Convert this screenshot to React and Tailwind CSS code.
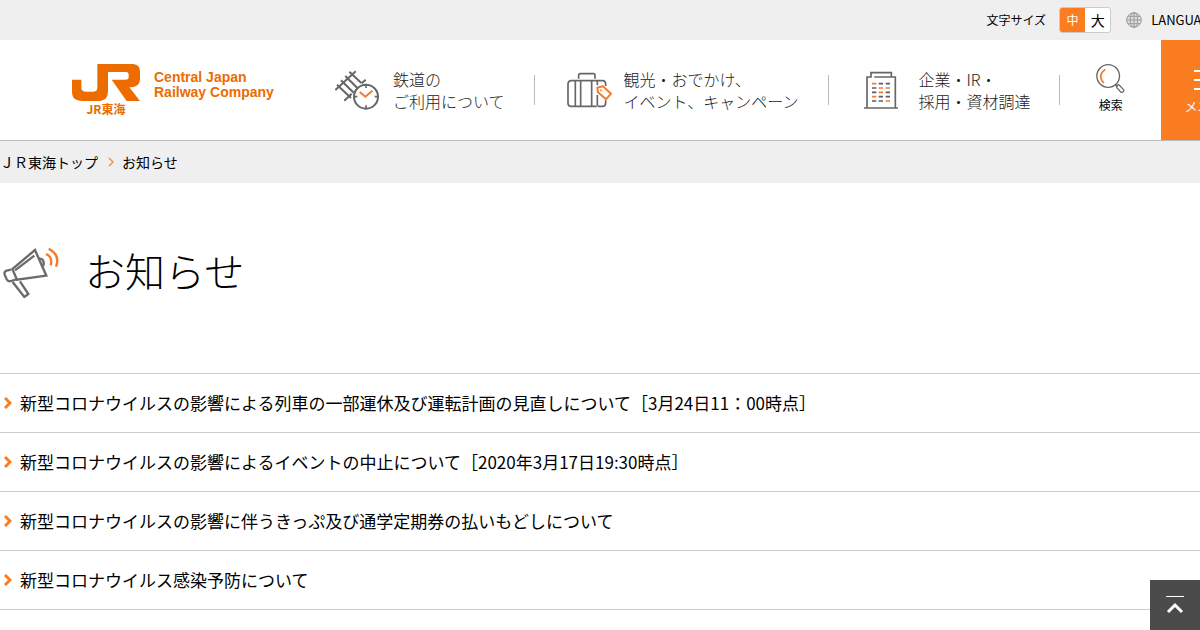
import React from 'react';

const news = [
  '新型コロナウイルスの影響による列車の一部運休及び運転計画の見直しについて［3月24日11：00時点］',
  '新型コロナウイルスの影響によるイベントの中止について［2020年3月17日19:30時点］',
  '新型コロナウイルスの影響に伴うきっぷ及び通学定期券の払いもどしについて',
  '新型コロナウイルス感染予防について',
];

function JrMark() {
  return (
    <svg viewBox="0 0 204 111" className="h-[37px] w-[68px]" fill="#ec6c00" aria-hidden="true">
      <path d="M76 0H176C198 0 204 8 204 24V44C204 62 194 69 172 70L204 111H164L119 47H160C168 47 170 44 170 38V33C170 27 168 24 162 24H108V80C108 102 98 111 76 111H32C8 111 0 102 0 82V47H28V70C28 79 32 83 40 83H64C73 83 76 79 76 70Z" />
    </svg>
  );
}

function RailIcon() {
  return (
    <svg viewBox="30 30 132 120" className="h-10 w-11 shrink-0" fill="none" stroke="#666" strokeWidth="6" aria-hidden="true">
      <path d="M31 90L92 34M58 122L80 101M110 70L122 59" />
      <path d="M36 74L78 114M48 61L86 98M61 48L97 84M73 35L109 69" />
      <circle cx="123" cy="110" r="36" />
      <path d="M123 76v8M123 136v8M89 110h8M149 110h8" strokeWidth="5" />
      <path d="M104 96L121 110L142 92" stroke="#f47b2b" />
    </svg>
  );
}

function SuitcaseIcon() {
  return (
    <svg viewBox="36 36 135 108" className="h-9 w-[45px] shrink-0" fill="none" stroke="#666" strokeWidth="5" aria-hidden="true">
      <path d="M71 56V46Q71 41 76 41H115Q120 41 120 46V56" />
      <path d="M125 139H48Q39 139 39 129V73Q39 62 49 62H143Q152 62 152 73V78M129 139H144Q152 138 152 128V121" />
      <path d="M61 62V139M77 62V139M110 62V139M127 62V76M127 105V139" />
      <path d="M127 83L144 79L168 101L153 118L129 97Z" stroke="#f47b2b" strokeWidth="6" strokeLinejoin="round" />
      <circle cx="138" cy="91" r="2" stroke="#f47b2b" strokeWidth="3" />
    </svg>
  );
}

function BuildingIcon() {
  return (
    <svg viewBox="132 34 102 114" className="h-[38px] w-[34px] shrink-0" fill="none" stroke="#666" strokeWidth="5" aria-hidden="true">
      <path d="M132 145H234M141 145V52H153V39H214V52H226V145M163 52H214" />
      <path d="M156 72H169M176 85H189M197 85H210M176 98H189M156 111H169M197 124H210" stroke="#f47b2b" />
      <path d="M176 72H189M197 72H210M156 85H169M156 98H169M197 98H210M176 111H189M197 111H210M156 124H169M176 124H189" stroke="#5b5d6b" />
    </svg>
  );
}

function SearchIcon() {
  return (
    <svg viewBox="110 70 86 87" className="h-[29px] w-[29px]" fill="none" stroke="#666" strokeWidth="4" aria-hidden="true">
      <circle cx="146" cy="106" r="34" />
      <path d="M137 86Q112 105 133 127" stroke="#f47b2b" strokeWidth="5" />
      <path d="M167 133L174 138M174 138Q171 132 178 132L192 147Q195 151 190 154Q185 157 182 152L172 141Q170 137 174 134" />
    </svg>
  );
}

function GlobeIcon() {
  return (
    <svg viewBox="0 0 48 48" className="h-4 w-4" fill="none" stroke="#9b9b9b" strokeWidth="3" aria-hidden="true">
      <circle cx="24" cy="24" r="22" fill="#ddd" />
      <ellipse cx="24" cy="24" rx="11" ry="22" />
      <path d="M24 2V46M2 24H46M6 13H42M6 35H42" />
    </svg>
  );
}

function MegaphoneIcon() {
  return (
    <svg viewBox="9 36 168 153" className="h-[51px] w-14 shrink-0" fill="none" stroke="#6b6b6b" strokeWidth="7" aria-hidden="true">
      <path d="M105 45L139 122L51 134L37 102Z" />
      <path d="M45 106L103 62" />
      <path d="M33 104L20 107Q11 110 14 119L20 133Q24 141 34 138L48 133" />
      <path d="M38 141L73 186L85 177L60 139" />
      <path d="M117 71Q135 70 130 94" />
      <path d="M138 57Q159 66 152 91M146 41Q182 60 168 95" stroke="#f47b2b" />
    </svg>
  );
}

const navItems = [
  { icon: <RailIcon />, lines: ['鉄道の', 'ご利用について'], link: 'gap-[14px] pl-[64px] pr-[29px]' },
  { icon: <SuitcaseIcon />, lines: ['観光・おでかけ、', 'イベント、キャンペーン'], link: 'gap-3 pl-8 pr-[30px]' },
  { icon: <BuildingIcon />, lines: ['企業・IR・', '採用・資材調達'], link: 'gap-5 pl-[35px] pr-[29px]' },
];

function TopBar() {
  return (
    <div className="flex h-10 items-center bg-[#efefef] pr-[42px] text-xs">
      <span className="ml-auto">文字サイズ</span>
      <div className="ml-[13px] flex h-[26px] w-[52px] overflow-hidden rounded-[3px] border border-[#ccc] bg-white">
        <button type="button" className="flex-1 bg-[#fa7d22] text-white">中</button>
        <button type="button" className="flex-1 text-sm">大</button>
      </div>
      <a href="#language" className="ml-[15px] flex items-center gap-[9px]">
        <GlobeIcon />
        <span className="text-[13px]">LANGUAGE</span>
      </a>
    </div>
  );
}

function Header() {
  return (
    <header className="min-w-[1260px]">
      <TopBar />
      <div className="flex h-[101px] border-b border-[#bbb] bg-white">
        <a href="#top" className="ml-[72px] flex w-[199px] items-start gap-[14px] pt-6 text-[#ec6c00]">
          <span className="flex flex-col items-center">
            <JrMark />
            <span className="text-xs leading-[15px] font-bold">JR東海</span>
          </span>
          <span className="pt-[6px] font-['Liberation_Sans',sans-serif] text-sm leading-[15px] font-bold whitespace-nowrap">
            Central Japan<br />Railway Company
          </span>
        </a>

        {/* Global navigation */}
        <nav className="flex items-center">
          {navItems.map((item) => (
            <a
              key={item.lines[0]}
              href="#nav"
              className={`flex h-[30px] items-center border-r border-[#bbb] font-['Noto_Sans_CJK_JP_Light','Noto_Sans_CJK_JP',sans-serif] text-base leading-[22px] font-light whitespace-nowrap text-[#222] ${item.link}`}
            >
              {item.icon}
              <span>{item.lines[0]}<br />{item.lines[1]}</span>
            </a>
          ))}
        </nav>

        <button type="button" className="flex w-[102px] flex-col items-center pt-6 text-xs">
          <SearchIcon />
          <span className="mt-1">検索</span>
        </button>
        <button type="button" className="ml-auto flex w-[100px] flex-col items-center bg-[#fa7d22] pt-[30px] text-[13px] leading-4 text-white">
          <svg viewBox="0 0 34 20" className="h-5 w-[34px]" stroke="currentColor" strokeWidth="2" aria-hidden="true">
            <path d="M0 1H34M0 10H34M0 19H34" />
          </svg>
          <span className="mt-2">メニュー</span>
        </button>
      </div>
    </header>
  );
}

function Breadcrumb() {
  return (
    <nav className="flex h-[42px] items-center bg-[#efefef] text-sm">
      <a href="#top">ＪＲ東海トップ</a>
      <svg viewBox="0 0 6 10" className="mr-2 ml-[10px] h-[10px] w-[6px]" fill="none" stroke="#f98a45" strokeWidth="1.4" aria-hidden="true">
        <path d="M1 1L5 5L1 9" />
      </svg>
      <span>お知らせ</span>
    </nav>
  );
}

function App() {
  return (
    <div className="h-screen overflow-hidden bg-white font-['Noto_Sans_CJK_JP',sans-serif] text-black">
      <Header />
      <Breadcrumb />

      <main>
        <div className="flex h-[190px] items-center gap-[26px] pb-3 pl-[3px]">
          <MegaphoneIcon />
          <h1 className="pb-1 font-['Noto_Sans_CJK_JP_Light','Noto_Sans_CJK_JP',sans-serif] text-[40px] leading-[60px] font-light">お知らせ</h1>
        </div>

        <ul className="border-t border-[#ccc]">
          {news.map((title) => (
            <li key={title} className="border-b border-[#ccc]">
              <a href="#news" className="flex h-[58px] items-center gap-2 pl-1 text-[17px]">
                <svg viewBox="0 0 8 12" className="h-3 w-2 shrink-0" fill="none" stroke="#fa7d22" strokeWidth="3" aria-hidden="true">
                  <path d="M1 1L6 6L1 11" />
                </svg>
                {title}
              </a>
            </li>
          ))}
        </ul>
      </main>

      {/* Back to top */}
      <a href="#top" aria-label="ページの先頭へ" className="fixed right-0 bottom-0 flex h-[50px] w-[50px] items-center justify-center bg-[#4b4b4b]">
        <svg viewBox="0 0 18 18" className="h-[18px] w-[18px]" fill="none" stroke="white" aria-hidden="true">
          <path d="M0 .5H18" />
          <path d="M2 16L9 9L16 16" strokeWidth="3" />
        </svg>
      </a>
    </div>
  );
}

export default App;
